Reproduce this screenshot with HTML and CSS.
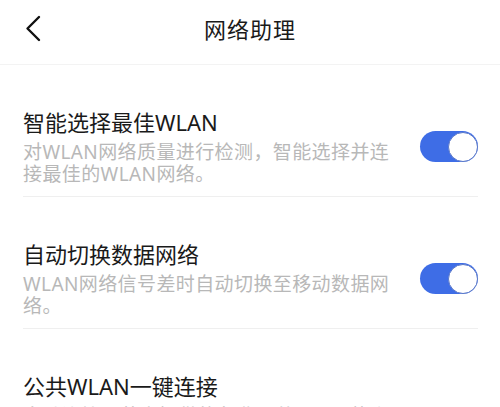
FILE: index.html
```html
<!DOCTYPE html>
<html lang="zh-CN">
<head>
<meta charset="UTF-8">
<title>网络助理</title>
<link rel="stylesheet" href="styles.css">
</head>
<body>
<header class="topbar">
    <button type="button" class="back" aria-label="返回">
        <svg width="16" height="28" viewBox="0 0 16 28"><path d="M14 2 L2.5 13.5 L14 25" fill="none" stroke="#111" stroke-width="2.4" stroke-linecap="round" stroke-linejoin="round"/></svg>
    </button>
    <h1>网络助理</h1>
    <span></span>
</header>
<main class="list">
    <div class="item">
        <div class="text">
            <div class="title">智能选择最佳WLAN</div>
            <div class="desc">对WLAN网络质量进行检测，智能选择并连<br>接最佳的WLAN网络。</div>
        </div>
        <span class="switch on"><span class="knob"></span></span>
    </div>
    <div class="item">
        <div class="text">
            <div class="title">自动切换数据网络</div>
            <div class="desc">WLAN网络信号差时自动切换至移动数据网<br>络。</div>
        </div>
        <span class="switch on"><span class="knob"></span></span>
    </div>
    <div class="item">
        <div class="text">
            <div class="title">公共WLAN一键连接</div>
            <div class="desc">自动连接运营商提供的免费公共WLAN热点<br>无需输入密码，一键即可上网。</div>
        </div>
    </div>
</main>
</body>
</html>
```
FILE: styles.css
```css
body{
    margin:0;
    background:#fff;
    font-family:"Noto Sans","Noto Sans CJK SC",sans-serif;
    color:#1a1a1a;
}
.topbar{
    height:64px;
    display:grid;
    grid-template-columns:1fr auto 1fr;
    align-items:center;
    border-bottom:1px solid #f3f3f3;
}
.back{
    justify-self:start;
    margin-left:25px;
    padding:0;
    border:none;
    background:none;
    display:flex;
    margin-top:-6px;
}
h1{
    margin:-8px 0 0;
    font-size:22px;
    font-weight:400;
    letter-spacing:1px;
}
.list{
    padding:0 22px 0 23px;
}
.item{
    display:flex;
    align-items:center;
    gap:24px;
    padding:43px 0 11px;
    border-bottom:1px solid #efefef;
}
.text{flex:1;}
.title{
    font-size:22px;
    line-height:28px;
}
.desc{
    margin-top:5px;
    font-size:19px;
    line-height:22px;
    letter-spacing:0.4px;
    white-space:nowrap;
    color:#b8b8b8;
}
.switch{
    flex:none;
    width:58px;
    height:31px;
    border-radius:16px;
    background:#3e6de6;
    display:flex;
    justify-content:flex-end;
    align-items:center;
}
.knob{
    width:28px;
    height:28px;
    border-radius:50%;
    background:#fff;
    border:1.5px solid #5a78c8;
}
```
